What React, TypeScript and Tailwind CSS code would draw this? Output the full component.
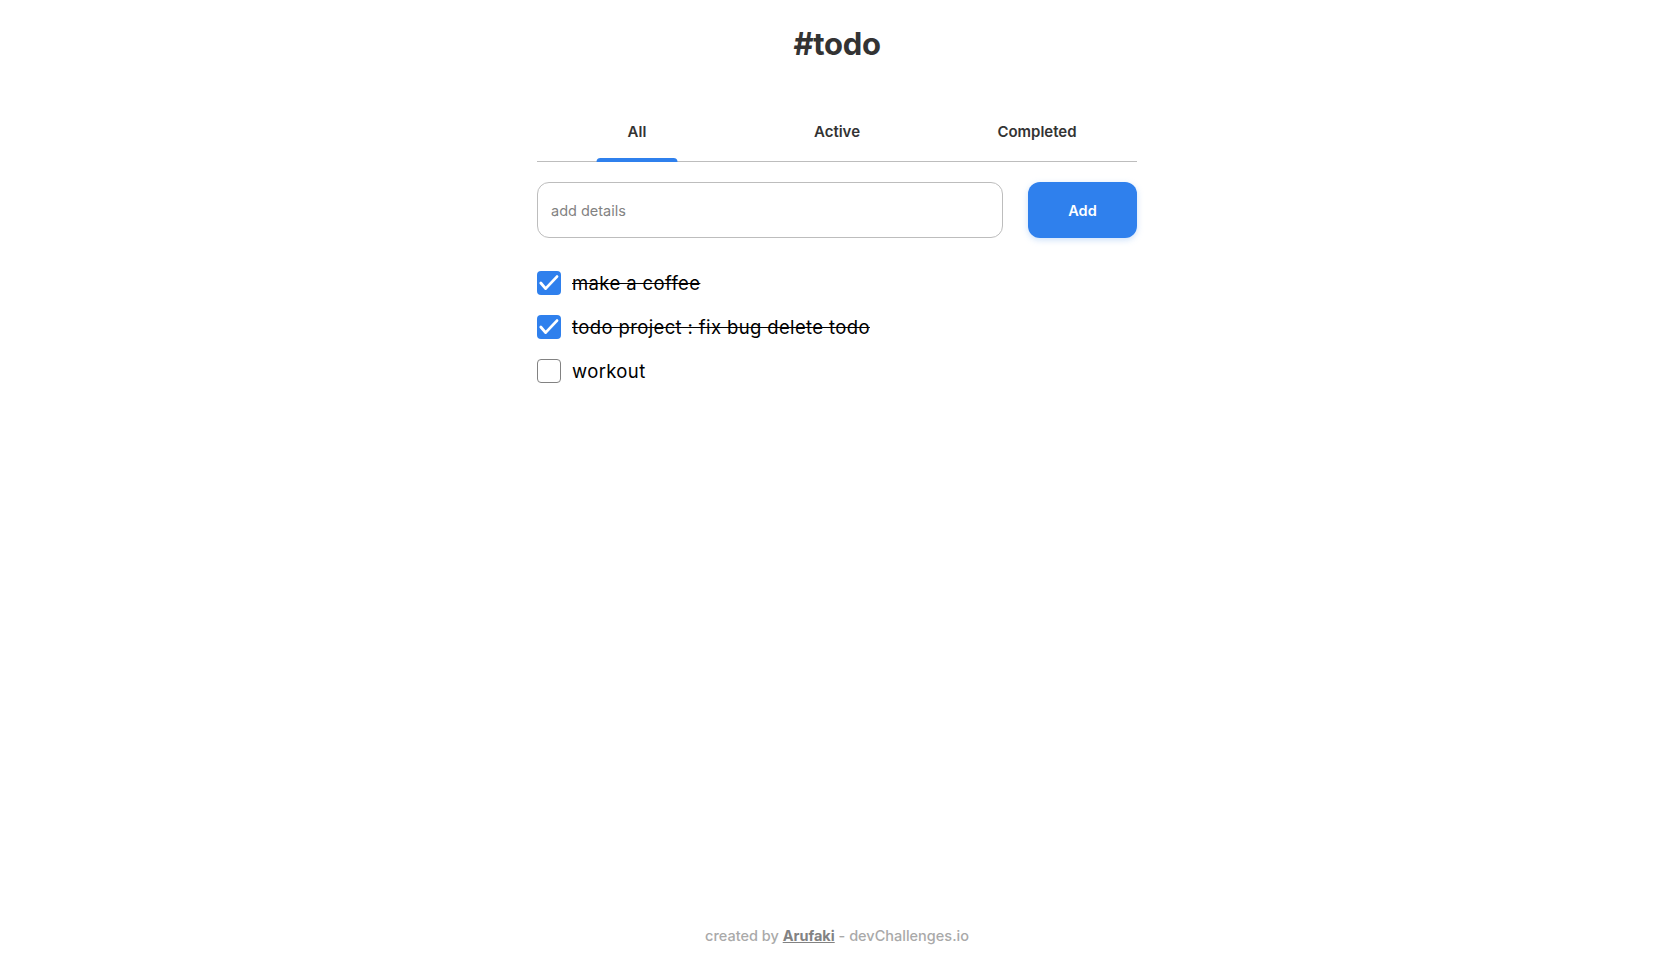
import { useState } from "react";

type Todo = { id: number; text: string; done: boolean };

const TABS = ["All", "Active", "Completed"] as const;

export default function App() {
  const [tab, setTab] = useState<(typeof TABS)[number]>("All");
  const [text, setText] = useState("");
  const [todos, setTodos] = useState<Todo[]>([
    { id: 1, text: "make a coffee", done: true },
    { id: 2, text: "todo project : fix bug delete todo", done: true },
    { id: 3, text: "workout", done: false },
  ]);

  const visible = todos.filter((t) =>
    tab === "All" ? true : tab === "Active" ? !t.done : t.done
  );

  const addTodo = () => {
    if (!text.trim()) return;
    setTodos([...todos, { id: Date.now(), text: text.trim(), done: false }]);
    setText("");
  };

  const toggle = (id: number) =>
    setTodos(todos.map((t) => (t.id === id ? { ...t, done: !t.done } : t)));

  return (
    <div className="min-h-screen flex flex-col pl-[21px] bg-white text-[#333333] font-['Inter',sans-serif]">
      <h1 className="pt-[22px] text-center text-[31px] leading-[44px] font-bold tracking-[-0.01em] text-[#333333]">
        #todo
      </h1>

      <main className="w-[600px] mx-auto mt-[44px]">
        <div className="flex border-b border-[#BDBDBD]">
          {TABS.map((t) => (
            <button
              key={t}
              onClick={() => setTab(t)}
              className="relative flex-1 pt-[13px] pb-[20px] text-[15px] leading-[18px] font-semibold text-[#333333]"
            >
              {t}
              {tab === t && (
                <span className="absolute left-1/2 -translate-x-1/2 bottom-[-1px] w-[81px] h-[4px] rounded-t-[4px] bg-[#2F80ED]" />
              )}
            </button>
          ))}
        </div>

        <div className="flex gap-[25px] mt-[20px]">
          <input
            value={text}
            onChange={(e) => setText(e.target.value)}
            placeholder="add details"
            className="flex-1 h-[56px] px-[13px] border border-[#BDBDBD] rounded-[12px] text-[14.5px] text-[#333333] placeholder:text-[#828282] outline-none"
          />
          <button
            onClick={addTodo}
            className="w-[109px] h-[56px] pt-[2px] rounded-[12px] bg-[#2F80ED] text-white text-[14.5px] font-semibold shadow-[0_2px_6px_rgba(127,177,243,0.4)]"
          >
            Add
          </button>
        </div>

        <ul className="mt-[33px] flex flex-col gap-[20px]">
          {visible.map((t) => (
            <li key={t.id} className="flex items-center gap-[11px] h-[24px]">
              <button
                onClick={() => toggle(t.id)}
                className={`w-[24px] h-[24px] rounded-[4px] flex items-center justify-center shrink-0 ${
                  t.done ? "bg-[#2F80ED]" : "border border-[#828282] bg-white"
                }`}
              >
                {t.done && (
                  <svg width="24" height="24" viewBox="0 0 24 24" fill="none">
                    <path
                      d="M3.8 12l4.8 5.6L20 5.6"
                      stroke="white"
                      strokeWidth="2.8"
                      strokeLinecap="round"
                      strokeLinejoin="round"
                    />
                  </svg>
                )}
              </button>
              <span
                className={`text-[18.5px] leading-[22px] font-normal tracking-[0.02em] text-black ${
                  t.done ? "line-through" : ""
                }`}
              >
                {t.text}
              </span>
            </li>
          ))}
        </ul>
      </main>

      <footer className="mt-auto pb-[15px] text-center text-[14.5px] leading-[17px] font-medium text-[#A9A9A9]">
        created by{" "}
        <a href="#" className="font-bold underline text-[#828282]">
          Arufaki
        </a>{" "}
        - devChallenges.io
      </footer>
    </div>
  );
}
